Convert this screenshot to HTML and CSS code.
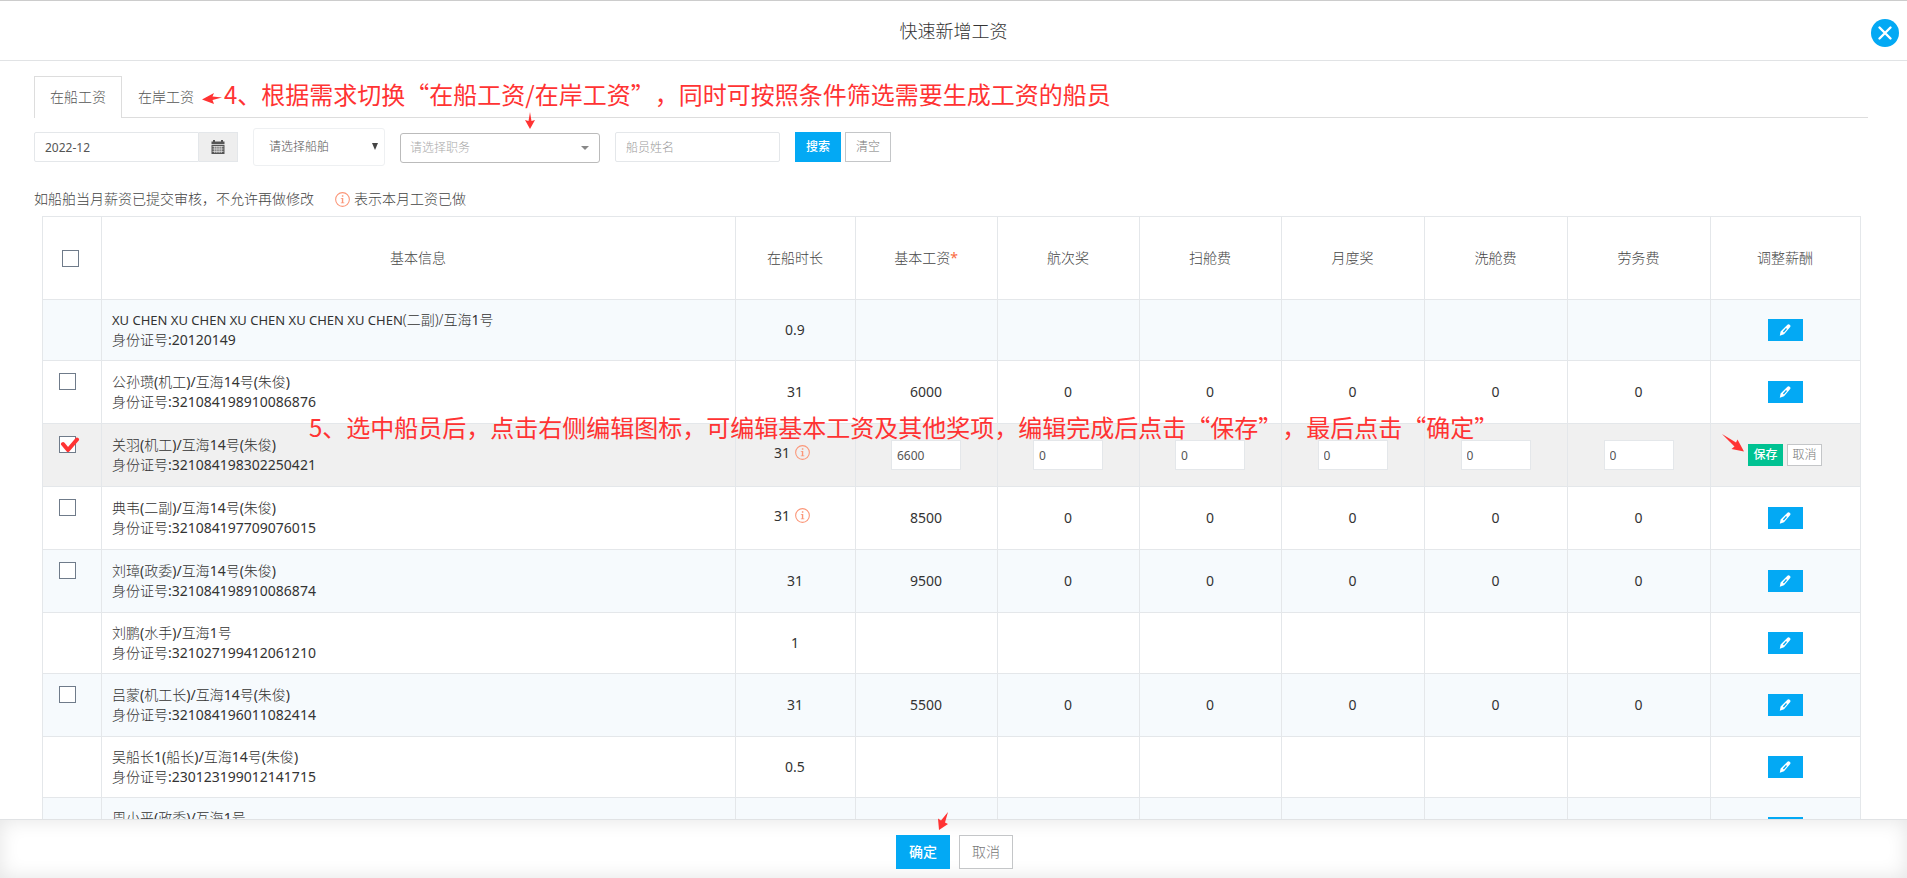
FILE: index.html
```html
<!DOCTYPE html>
<html lang="zh-CN">
<head>
<meta charset="utf-8">
<title>快速新增工资</title>
<link rel="stylesheet" href="styles.css">
</head>
<body>
<svg class="sprite" aria-hidden="true">
  <symbol id="info" viewBox="0 0 14 14"><circle cx="7" cy="7" r="6.4" fill="none" stroke="currentColor"/><path d="M6.4 3h1.4v1.4H6.4zM5.4 5.6h2.3v4.2h1v.8H5.4v-.8h1V6.4h-1z" fill="currentColor"/></symbol>
  <symbol id="pencil" viewBox="0 0 12 12"><path fill="currentColor" fill-rule="evenodd" d="M8.200 1a1.700 1.700 0 0 1 2.500-.2 1.700 1.700 0 0 1 .3 2.500L5 10.200.8 11.700 1.600 7.600zM7 4.100 3.900 7.500l1 .9L8 5z"/></symbol>
</svg>
<div class="dialog">
  <header class="title-bar">
    <h1>快速新增工资</h1>
    <button class="close" type="button" aria-label="关闭"><svg viewBox="0 0 28 28"><path d="M8.500 8.500l11 11M19.500 8.500l-11 11" stroke="#fff" stroke-width="2.400" stroke-linecap="round"/></svg></button>
  </header>
  <main class="content">
    <nav class="tabs">
      <a class="tab active" href="#ship">在船工资</a>
      <a class="tab" href="#shore">在岸工资</a>
    </nav>
    <form class="filters">
      <div class="month">
        <input type="text" value="2022-12" aria-label="月份">
        <button type="button" aria-label="选择月份"><svg viewBox="0 0 14 14"><path fill="#555" d="M.5 1.500H2V0h2v1.500h6V0h2v1.500h1.500V4H.5zM.5 4.700h13V14H.5z"/><path stroke="#eee" stroke-width=".8" d="M1.500 6.700h11M1.500 9h11M1.500 11.300h11M3.800 6v7M5.900 6v7M8.100 6v7M10.200 6v7"/></svg></button>
      </div>
      <div class="pick ship"><select aria-label="船舶"><option>请选择船舶</option></select></div>
      <div class="pick duty"><select aria-label="职务"><option>请选择职务</option></select></div>
      <input class="name" type="text" placeholder="船员姓名" aria-label="船员姓名">
      <div class="actions"><button class="btn primary" type="button">搜索</button><button class="btn" type="button">清空</button></div>
    </form>
    <p class="hint"><span>如船舶当月薪资已提交审核，不允许再做修改</span><span class="legend"><svg class="info"><use href="#info"/></svg>表示本月工资已做</span></p>
    <table class="grid">
      <colgroup><col class="c-check"><col><col class="c-time"><col class="c-pay" span="3"><col class="c-pay-wide" span="3"><col class="c-edit"></colgroup>
      <thead><tr><th><input type="checkbox" aria-label="全选"></th><th>基本信息</th><th>在船时长</th><th>基本工资<em>*</em></th><th>航次奖</th><th>扫舱费</th><th>月度奖</th><th>洗舱费</th><th>劳务费</th><th>调整薪酬</th></tr></thead>
      <tbody>
        <tr><td></td><td><span class="latin">XU CHEN XU CHEN XU CHEN XU CHEN XU CHEN</span>(二副)/互海<b>1</b>号<br>身份证号<b>:20120149</b></td><td>0.9</td><td></td><td></td><td></td><td></td><td></td><td></td><td><button class="edit" type="button" aria-label="编辑"><svg><use href="#pencil"/></svg></button></td></tr>
        <tr class="tall"><td><input type="checkbox" aria-label="公孙瓒"></td><td>公孙瓒<b>(</b>机工<b>)/</b>互海<b>14</b>号<b>(</b>朱俊<b>)</b><br>身份证号<b>:321084198910086876</b></td><td>31</td><td>6000</td><td>0</td><td>0</td><td>0</td><td>0</td><td>0</td><td><button class="edit" type="button" aria-label="编辑"><svg><use href="#pencil"/></svg></button></td></tr>
        <tr class="tall editing"><td><span class="ticked"><input type="checkbox" aria-label="关羽"><svg class="tick" viewBox="0 0 20 16"><path d="M3 7l5 6L17 2.500" fill="none" stroke="#f33" stroke-width="4" stroke-linecap="round" stroke-linejoin="round"/></svg></span></td><td>关羽<b>(</b>机工<b>)/</b>互海<b>14</b>号<b>(</b>朱俊<b>)</b><br>身份证号<b>:321084198302250421</b></td><td class="done">31<svg class="info"><use href="#info"/></svg></td><td><input type="text" value="6600" aria-label="基本工资"></td><td><input type="text" value="0" aria-label="航次奖"></td><td><input type="text" value="0" aria-label="扫舱费"></td><td><input type="text" value="0" aria-label="月度奖"></td><td><input type="text" value="0" aria-label="洗舱费"></td><td><input type="text" value="0" aria-label="劳务费"></td><td><div class="row-actions"><button class="save" type="button">保存</button><button class="cancel" type="button">取消</button></div></td></tr>
        <tr class="tall"><td><input type="checkbox" aria-label="典韦"></td><td>典韦<b>(</b>二副<b>)/</b>互海<b>14</b>号<b>(</b>朱俊<b>)</b><br>身份证号<b>:321084197709076015</b></td><td class="done">31<svg class="info"><use href="#info"/></svg></td><td>8500</td><td>0</td><td>0</td><td>0</td><td>0</td><td>0</td><td><button class="edit" type="button" aria-label="编辑"><svg><use href="#pencil"/></svg></button></td></tr>
        <tr class="tall"><td><input type="checkbox" aria-label="刘璋"></td><td>刘璋<b>(</b>政委<b>)/</b>互海<b>14</b>号<b>(</b>朱俊<b>)</b><br>身份证号<b>:321084198910086874</b></td><td>31</td><td>9500</td><td>0</td><td>0</td><td>0</td><td>0</td><td>0</td><td><button class="edit" type="button" aria-label="编辑"><svg><use href="#pencil"/></svg></button></td></tr>
        <tr><td></td><td>刘鹏<b>(</b>水手<b>)/</b>互海<b>1</b>号<br>身份证号<b>:321027199412061210</b></td><td>1</td><td></td><td></td><td></td><td></td><td></td><td></td><td><button class="edit" type="button" aria-label="编辑"><svg><use href="#pencil"/></svg></button></td></tr>
        <tr class="tall"><td><input type="checkbox" aria-label="吕蒙"></td><td>吕蒙<b>(</b>机工长<b>)/</b>互海<b>14</b>号<b>(</b>朱俊<b>)</b><br>身份证号<b>:321084196011082414</b></td><td>31</td><td>5500</td><td>0</td><td>0</td><td>0</td><td>0</td><td>0</td><td><button class="edit" type="button" aria-label="编辑"><svg><use href="#pencil"/></svg></button></td></tr>
        <tr><td></td><td>吴船长<b>1(</b>船长<b>)/</b>互海<b>14</b>号<b>(</b>朱俊<b>)</b><br>身份证号<b>:230123199012141715</b></td><td>0.5</td><td></td><td></td><td></td><td></td><td></td><td></td><td><button class="edit" type="button" aria-label="编辑"><svg><use href="#pencil"/></svg></button></td></tr>
        <tr><td></td><td>周小平<b>(</b>政委<b>)/</b>互海<b>1</b>号<br>&nbsp;</td><td></td><td></td><td></td><td></td><td></td><td></td><td></td><td><button class="edit" type="button" aria-label="编辑"><svg><use href="#pencil"/></svg></button></td></tr>
      </tbody>
    </table>
  </main>
  <footer class="bottom-bar"><button class="btn primary" type="button">确定</button><button class="btn" type="button">取消</button></footer>
  <p class="note note-tabs">4、根据需求切换“在船工资/在岸工资”，同时可按照条件筛选需要生成工资的船员</p>
  <p class="note note-edit">5、选中船员后，点击右侧编辑图标，可编辑基本工资及其他奖项，编辑完成后点击“保存”，最后点击“确定”</p>
  <svg class="arrow arrow-tabs" viewBox="0 0 20 12"><path d="M0 7.500 12 1l-1.500 3.500L20 5.500 10.500 8l1.500 4z"/></svg>
  <svg class="arrow arrow-duty" viewBox="0 0 10 17"><path d="M5 0 6.500 9 10 8 5 17 0 8l3.500 1z"/></svg>
  <svg class="arrow arrow-save" viewBox="0 0 22 18"><path d="M0 0 14 8.500 15.500 5.500 22 17.500 9.500 15l3-2.500z"/></svg>
  <svg class="arrow arrow-ok" viewBox="0 0 10 18"><path d="M10 0 7 10.500l3 1.500L1 18 0 6.500l3 2z"/></svg>
</div>
</body>
</html>
```
FILE: styles.css
```css
* { box-sizing: border-box; }
body { margin: 0; font: 300 14px/20px "Noto Sans", "Noto Sans CJK SC", sans-serif; color: #333; background: #fff; }
button, input, select { font: inherit; color: inherit; margin: 0; }
button { cursor: pointer; padding: 0; }
p { margin: 0; }
.sprite { position: absolute; width: 0; height: 0; }

.dialog { position: relative; display: flex; flex-direction: column; height: 100vh; overflow: hidden; border-top: 1px solid #ccc; }
.title-bar { position: relative; flex: none; display: flex; align-items: center; justify-content: center; height: 60px; border-bottom: 1px solid #e1e3e5; }
.title-bar h1 { margin: 0; font-size: 18px; font-weight: 300; line-height: 24px; }
.close { position: absolute; right: 8px; top: 18px; width: 28px; height: 28px; border: 0; border-radius: 50%; background: #03a9f4; }
.close svg { display: block; }

.content { flex: 1; min-height: 0; overflow: hidden; padding: 15px 39px 0 34px; }
.tabs { display: flex; height: 42px; border-bottom: 1px solid #ddd; }
.tab { height: 42px; padding: 10px 15px 0; color: #555; text-decoration: none; border: 1px solid transparent; border-bottom: 0; }
.tab.active { background: #fff; border-color: #ddd; }

.filters { display: flex; align-items: center; gap: 15px; height: 38px; margin-top: 10px; font-size: 12px; color: #555; }
.filters input { height: 30px; padding: 0 10px; border: 1px solid #e4e7ea; border-radius: 2px; background: #fff; outline: 0; }
.month { display: flex; }
.filters .month input { width: 165px; border-radius: 2px 0 0 2px; font-weight: 400; }
.month button { display: flex; align-items: center; justify-content: center; width: 39px; height: 30px; border: 1px solid #e4e7ea; border-left: 0; background: #eee; }
.month svg { width: 14px; height: 14px; }
.pick { position: relative; }
.pick::after { content: ""; position: absolute; pointer-events: none; border-style: solid; border-color: #444 transparent; }
.pick select { display: block; width: 100%; appearance: none; background: #fff; outline: 0; }
.ship { width: 132px; }
.ship select { height: 38px; padding: 0 15px; border: 1px solid #eef0f2; border-radius: 3px; }
.ship::after { right: 7px; top: 15px; border-width: 7px 3px 0; }
.duty { width: 200px; padding-top: 2px; }
.duty select { height: 30px; padding: 0 9px; color: #aaa; border: 1px solid #bbb; border-radius: 3px; }
.duty::after { right: 11px; top: 15px; border-width: 4px 4px 0; border-color: #888 transparent; }
.filters .name { width: 165px; }
.name::placeholder { color: #999; }
.actions { display: flex; gap: 4px; }
.btn { width: 46px; height: 30px; border: 1px solid #c4c6c8; background: #fff; color: #777; }
.btn.primary { border-color: #03a9f4; background: #03a9f4; color: #fff; font-weight: 500; }

.hint { display: flex; gap: 21px; margin-top: 23px; color: #444; }
.legend { display: flex; align-items: center; gap: 4px; }
.info { width: 15px; height: 15px; color: #fb9678; }

.grid { width: calc(100% - 15px); margin: 7px 7px 0 8px; table-layout: fixed; border-collapse: collapse; }
.c-check { width: 59px; }
.c-time { width: 120px; }
.c-pay { width: 142px; }
.c-pay-wide { width: 143px; }
.c-edit { width: 150px; }
.grid th, .grid td { padding: 0 1px 0 0; text-align: center; border: 1px solid #e4e7ea; }
.grid th { height: 83px; font-weight: 300; color: #444; }
.grid th em { font-style: normal; font-weight: 400; color: #f96a3f; }
.grid td { height: 61px; font-weight: 400; }
.grid b { font-weight: 400; }
.grid .tall td { height: 63px; }
.grid td:nth-child(2) { padding-left: 10px; text-align: left; font-weight: 300; }
.latin { font-size: 13px; font-weight: 400; }
.grid tbody tr:nth-child(odd) { background: #f6fafd; }
.grid tbody tr.editing { background: #f0f0f0; }
.grid input[type="checkbox"] { appearance: none; display: block; width: 17px; height: 17px; margin: 0 auto; border: 1px solid #6f7b8a; background: #fff; }
.grid th:first-child { padding-right: 3px; }
.grid td:first-child { padding: 12px 0 0 16px; vertical-align: top; }
.grid td input[type="checkbox"] { margin: 0; }
.ticked { position: relative; display: block; }
.tick { position: absolute; left: 1px; top: 1px; width: 20px; height: 16px; }
.grid .done { padding: 0 7px 5px 0; }
.done .info { margin-left: 5px; vertical-align: -2px; }
.grid input[type="text"] { display: block; width: 70px; height: 30px; margin: 0 auto; padding: 0 5px; border: 1px solid #e4e7ea; background: #fff; font-size: 12px; color: #555; outline: 0; }
.edit { display: flex; align-items: center; justify-content: center; width: 35px; height: 22px; margin: 0 auto; border: 0; background: #03a9f4; color: #fff; }
.edit svg { width: 12px; height: 12px; }
.row-actions { display: flex; justify-content: center; gap: 4px; font-size: 12px; }
.row-actions button { width: 35px; height: 22px; line-height: 18px; border: 1px solid #c4c6c8; background: #fff; color: #777; font-weight: 300; }
.row-actions .save { border-color: #00c292; background: #00c292; color: #fff; font-weight: 500; }

.bottom-bar { position: relative; flex: none; display: flex; justify-content: center; gap: 9px; height: 59px; padding: 15px 0 0 2px; border-top: 1px solid #e1e3e5; background: #fff; box-shadow: inset 0 0 20px #e4e4e4; }
.bottom-bar .btn { width: 54px; height: 34px; }

.note { position: absolute; font: 400 24px/32px "Noto Sans CJK SC", sans-serif; font-kerning: none; text-spacing-trim: space-all; color: #f33; white-space: nowrap; }
.note-tabs { left: 224px; top: 77px; }
.note-edit { left: 309px; top: 410px; }
.arrow { position: absolute; fill: #f33; }
.arrow-tabs { left: 202px; top: 91px; width: 20px; height: 12px; }
.arrow-duty { left: 525px; top: 111px; width: 10px; height: 17px; }
.arrow-save { left: 1722px; top: 433px; width: 22px; height: 18px; }
.arrow-ok { left: 938px; top: 811px; width: 10px; height: 18px; }
```
